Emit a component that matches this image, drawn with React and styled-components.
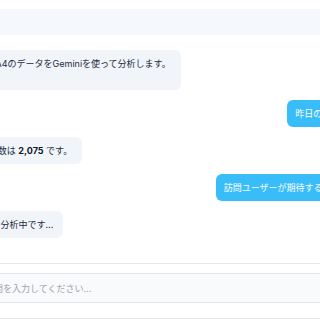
import React from "react";
import styled, { createGlobalStyle } from "styled-components";

const GlobalStyle = createGlobalStyle`
  html, body {
    margin: 0;
    padding: 0;
    background: #ffffff;
  }

  body {
    font-family: Inter, "Noto Sans CJK JP", "Noto Sans", sans-serif;
  }
`;

const Viewport = styled.div`
  width: 100vw;
  height: 100vh;
  overflow: hidden;
  display: flex;
  justify-content: center;
  padding-top: 9px;
  box-sizing: border-box;
`;

const Panel = styled.div`
  width: 534px;
  flex-shrink: 0;
  display: flex;
  flex-direction: column;
`;

const Header = styled.div`
  height: 26px;
  background: #f5f8fc;
`;

const Messages = styled.div`
  display: flex;
  flex-direction: column;
  gap: 10px;
  padding: 15px 16px 25px;
`;

const Bubble = styled.div`
  align-self: ${(p) => (p.$user ? "flex-end" : "flex-start")};
  background: ${(p) => (p.$user ? "#38bdf8" : "#f1f5f9")};
  color: ${(p) => (p.$user ? "#ffffff" : "#1e293b")};
  font-size: 9px;
  line-height: 13px;
  padding: ${(p) => (p.$user ? "7px 8px" : "7px 10px 7px 8px")};
  border-radius: 6px;
  white-space: nowrap;
`;

const Strong = styled.strong`
  font-weight: 700;
  color: #0f172a;
`;

const Composer = styled.div`
  display: flex;
  gap: 8px;
  padding: 9px 16px 15px;
  border-top: 1px solid #e5e7eb;
  border-bottom: 1px solid #e5e7eb;
`;

const Input = styled.input`
  flex: 1;
  height: 30px;
  box-sizing: border-box;
  padding: 0 12px;
  border: 1px solid #e2e5ea;
  border-radius: 4px;
  background: #f9fafb;
  font-family: inherit;
  font-size: 9px;
  color: #1e293b;
  outline: none;

  &::placeholder {
    color: #9ca3af;
  }
`;

const SendButton = styled.button`
  width: 60px;
  height: 30px;
  border: none;
  border-radius: 4px;
  background: #38bdf8;
  color: #ffffff;
  font-family: inherit;
  font-size: 9px;
`;

export default function App() {
  return (
    <>
      <GlobalStyle />
      <Viewport>
        <Panel>
          <Header />
          <Messages>
            <Bubble>
              こんにちは！私はGA4のデータをGeminiを使って分析します。
              <br />
              何でもどうぞ。
            </Bubble>
            <Bubble $user>昨日の訪問ユーザー数は？</Bubble>
            <Bubble>
              昨日の訪問ユーザー数は <Strong>2,075</Strong> です。
            </Bubble>
            <Bubble $user>訪問ユーザーが期待するコンテンツを教えて</Bubble>
            <Bubble>質問内容をGeminiで分析中です...</Bubble>
          </Messages>
          <Composer>
            <Input placeholder="データに関する質問を入力してください..." />
            <SendButton>送信</SendButton>
          </Composer>
        </Panel>
      </Viewport>
    </>
  );
}
